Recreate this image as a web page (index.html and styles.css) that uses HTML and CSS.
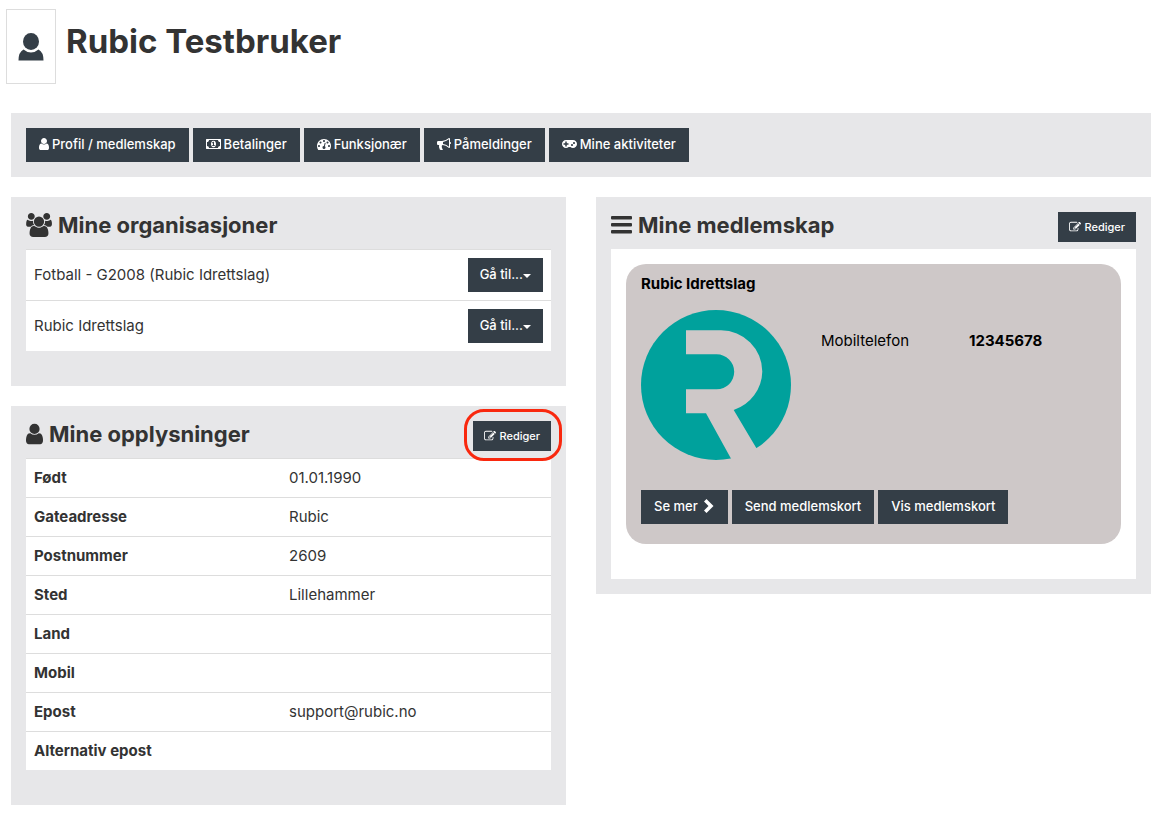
FILE: index.html
```html
<!DOCTYPE html>
<html lang="no">
<head>
    <meta charset="UTF-8">
    <meta name="viewport" content="width=device-width, initial-scale=1.0">
    <title>Rubic Testbruker</title>
    <link rel="stylesheet" href="styles.css">
</head>
<body>

    <!-- Icons used more than once -->
    <svg class="sprite" aria-hidden="true">
        <symbol id="icon-user" viewBox="256 0 1280 1792">
            <path d="M1536 1399q0 109-62.5 187t-150.5 78h-854q-88 0-150.5-78t-62.5-187q0-85 8.5-160.5t31.5-152 58.5-131 94-89 134.5-34.5q131 128 313 128t313-128q76 0 134.5 34.5t94 89 58.5 131 31.5 152 8.5 160.5zm-256-887q0 159-112.5 271.5t-271.5 112.5-271.5-112.5-112.5-271.5 112.5-271.5 271.5-112.5 271.5 112.5 112.5 271.5z"/>
        </symbol>
        <symbol id="icon-edit" viewBox="0 0 1792 1792">
            <path d="M888 1184l116-116-152-152-116 116v56h96v96h56zm440-720q-16-16-33 1l-350 350q-17 17-1 33t33-1l350-350q17-17 1-33zm80 594v190q0 119-84.5 203.5t-203.5 84.5h-832q-119 0-203.5-84.5t-84.5-203.5v-832q0-119 84.5-203.5t203.5-84.5h832q63 0 117 25 15 7 18 23 3 17-9 29l-49 49q-14 14-32 8-23-6-45-6h-832q-66 0-113 47t-47 113v832q0 66 47 113t113 47h832q66 0 113-47t47-113v-126q0-13 9-22l64-64q15-15 35-7t20 29zm-96-738l288 288-672 672h-288v-288zm444 132l-92 92-288-288 92-92q28-28 68-28t68 28l152 152q28 28 28 68t-28 68z"/>
        </symbol>
    </svg>

    <header class="page-header">
        <div class="avatar">
            <svg class="avatar-icon" viewBox="0 0 52 56" aria-hidden="true">
                <ellipse cx="26" cy="17" rx="16" ry="17"/>
                <path d="M11 33Q18 39 26 39T41 33Q51 38 51 55H1Q1 38 11 33z"/>
            </svg>
        </div>
        <h1>Rubic Testbruker</h1>
    </header>

    <nav class="toolbar">
        <a class="btn" href="#profil">
            <svg class="icon icon-narrow" aria-hidden="true"><use href="#icon-user"/></svg>
            Profil / medlemskap
        </a>
        <a class="btn" href="#betalinger">
            <svg class="icon icon-wide" viewBox="-64 0 1920 1792" aria-hidden="true">
                <path d="M704 1152h384v-96h-128v-448h-114l-148 137 77 80q42-37 55-57h2v288h-128v96zm512-256q0 70-21 142t-59.5 134-101.5 101-138 39-138-39-101.5-101-59.5-134-21-142 21-142 59.5-134 101.5-101 138-39 138 39 101.5 101 59.5 134 21 142zm512 256v-512q-106 0-181-75t-75-181h-1152q0 106-75 181t-181 75v512q106 0 181 75t75 181h1152q0-106 75-181t181-75zm128-832v1152q0 26-19 45t-45 19h-1792q-26 0-45-19t-19-45v-1152q0-26 19-45t45-19h1792q26 0 45 19t19 45z"/>
            </svg>
            Betalinger
        </a>
        <a class="btn" href="#funksjonaer">
            <svg class="icon" viewBox="0 0 1792 1792" aria-hidden="true">
                <path d="M384 1152q0-53-37.5-90.5t-90.5-37.5-90.5 37.5-37.5 90.5 37.5 90.5 90.5 37.5 90.5-37.5 37.5-90.5zm192-448q0-53-37.5-90.5t-90.5-37.5-90.5 37.5-37.5 90.5 37.5 90.5 90.5 37.5 90.5-37.5 37.5-90.5zm428 481l101-382q6-26-7.5-48.5t-38.5-29.5-48 6.5-30 39.5l-101 382q-60 5-107 43.5t-63 98.5q-20 77 20 146t117 89 146-20 89-117q16-60-6-117t-72-91zm660-33q0-53-37.5-90.5t-90.5-37.5-90.5 37.5-37.5 90.5 37.5 90.5 90.5 37.5 90.5-37.5 37.5-90.5zm-640-640q0-53-37.5-90.5t-90.5-37.5-90.5 37.5-37.5 90.5 37.5 90.5 90.5 37.5 90.5-37.5 37.5-90.5zm448 192q0-53-37.5-90.5t-90.5-37.5-90.5 37.5-37.5 90.5 37.5 90.5 90.5 37.5 90.5-37.5 37.5-90.5zm320 448q0 261-141 483-19 29-54 29h-1402q-35 0-54-29-141-221-141-483 0-182 71-348t191-286 286-191 348-71 348 71 286 191 191 286 71 348z"/>
            </svg>
            Funksjonær
        </a>
        <a class="btn" href="#pameldinger">
            <svg class="icon" viewBox="0 0 1792 1792" aria-hidden="true">
                <path d="M1664 640q53 0 90.5 37.5t37.5 90.5-37.5 90.5-90.5 37.5v384q0 52-38 90t-90 38q-417-347-812-380-58 19-91 66t-31 100.5 40 92.5q-20 33-23 65.5t6 58 33.5 55 48 50 61.5 50.5q-29 58-111.5 83t-168.5 11.5-132-55.5q-7-23-29.5-87.5t-32-94.5-23-89-15-101 3.5-98.5 22-110.5h-122q-66 0-113-47t-47-113v-192q0-66 47-113t113-47h480q435 0 896-384 52 0 90 38t38 90v384zm-128 604v-954q-394 302-768 343v270q377 42 768 341z"/>
            </svg>
            Påmeldinger
        </a>
        <a class="btn" href="#aktiviteter">
            <svg class="icon icon-wide" viewBox="0 128 1920 1792" aria-hidden="true">
                <path d="M832 1088v-128q0-14-9-23t-23-9h-192v-192q0-14-9-23t-23-9h-128q-14 0-23 9t-9 23v192h-192q-14 0-23 9t-9 23v128q0 14 9 23t23 9h192v192q0 14 9 23t23 9h128q14 0 23-9t9-23v-192h192q14 0 23-9t9-23zm576 64q0-53-37.5-90.5t-90.5-37.5-90.5 37.5-37.5 90.5 37.5 90.5 90.5 37.5 90.5-37.5 37.5-90.5zm256-256q0-53-37.5-90.5t-90.5-37.5-90.5 37.5-37.5 90.5 37.5 90.5 90.5 37.5 90.5-37.5 37.5-90.5zm256 128q0 212-150 362t-362 150q-192 0-338-128h-220q-146 128-338 128-212 0-362-150t-150-362 150-362 362-150h896q212 0 362 150t150 362z"/>
            </svg>
            Mine aktiviteter
        </a>
    </nav>

    <main class="columns">
        <div class="column">
            <section class="panel">
                <div class="panel-head">
                    <h2>
                        <svg class="head-icon head-icon-users" viewBox="-64 0 1920 1792" aria-hidden="true">
                            <path d="M529 896q-162 5-265 128h-134q-82 0-138-40.5t-56-118.5q0-353 124-353 6 0 43.5 21t97.5 42.5 119 21.5q67 0 133-23-5 37-5 66 0 159 90 256zm1071 637q0 120-73 189.5t-194 69.5h-874q-121 0-194-69.5t-73-189.5q0-53 3.5-103.5t14-109 26.5-108.5 43-97.5 62-81 85.5-53.5 111.5-20q10 0 43 21.5t73 48 107 48 135 21.5 135-21.5 107-48 73-48 43-21.5q61 0 111.5 20t85.5 53.5 62 81 43 97.5 26.5 108.5 14 109 3.5 103.5zm-1024-1277q0 106-75 181t-181 75-181-75-75-181 75-181 181-75 181 75 75 181zm704 384q0 159-112.5 271.5t-271.5 112.5-271.5-112.5-112.5-271.5 112.5-271.5 271.5-112.5 271.5 112.5 112.5 271.5zm576 225q0 78-56 118.5t-138 40.5h-134q-103-123-265-128 90-97 90-256 0-29-5-66 66 23 133 23 59 0 119-21.5t97.5-42.5 43.5-21q124 0 124 353zm-128-609q0 106-75 181t-181 75-181-75-75-181 75-181 181-75 181 75 75 181z"/>
                        </svg>
                        Mine organisasjoner
                    </h2>
                </div>
                <table class="table">
                    <tr>
                        <td>Fotball - G2008 (Rubic Idrettslag)</td>
                        <td class="actions"><button class="btn dropdown" type="button">Gå til...<span class="caret"></span></button></td>
                    </tr>
                    <tr>
                        <td>Rubic Idrettslag</td>
                        <td class="actions"><button class="btn dropdown" type="button">Gå til...<span class="caret"></span></button></td>
                    </tr>
                </table>
            </section>

            <section class="panel">
                <div class="panel-head">
                    <h2>
                        <svg class="head-icon head-icon-user" aria-hidden="true"><use href="#icon-user"/></svg>
                        Mine opplysninger
                    </h2>
                    <button class="btn btn-small highlighted" type="button">
                        <svg class="icon" aria-hidden="true"><use href="#icon-edit"/></svg>
                        Rediger
                    </button>
                </div>
                <table class="table info">
                    <tr><th scope="row">Født</th><td>01.01.1990</td></tr>
                    <tr><th scope="row">Gateadresse</th><td>Rubic</td></tr>
                    <tr><th scope="row">Postnummer</th><td>2609</td></tr>
                    <tr><th scope="row">Sted</th><td>Lillehammer</td></tr>
                    <tr><th scope="row">Land</th><td></td></tr>
                    <tr><th scope="row">Mobil</th><td></td></tr>
                    <tr><th scope="row">Epost</th><td>support@rubic.no</td></tr>
                    <tr><th scope="row">Alternativ epost</th><td></td></tr>
                </table>
            </section>
        </div>

        <div class="column">
            <section class="panel">
                <div class="panel-head">
                    <h2>
                        <svg class="head-icon head-icon-bars" viewBox="0 0 42 48" aria-hidden="true">
                            <rect y="6" width="42" height="7" rx="2"/>
                            <rect y="20" width="42" height="7" rx="2"/>
                            <rect y="34" width="42" height="7" rx="2"/>
                        </svg>
                        Mine medlemskap
                    </h2>
                    <button class="btn btn-small" type="button">
                        <svg class="icon" aria-hidden="true"><use href="#icon-edit"/></svg>
                        Rediger
                    </button>
                </div>
                <div class="memberships">
                    <article class="card">
                        <h3>Rubic Idrettslag</h3>
                        <div class="card-body">
                            <svg class="logo" viewBox="0 0 150 150" role="img" aria-label="Rubic">
                                <circle cx="75" cy="75" r="75" fill="#00a19c"/>
                                <path fill="#cec8c8" d="M45 20.3H80A41.3 41.3 0 0 1 121.3 61.6A41.3 41.3 0 0 1 92.7 100L124.5 153.5H92.7L65 103.3H45V79.3H75.7A17.5 17.5 0 0 0 75.7 44.3H45z"/>
                            </svg>
                            <dl class="details">
                                <dt>Mobiltelefon</dt>
                                <dd>12345678</dd>
                            </dl>
                        </div>
                        <div class="card-actions">
                            <button class="btn" type="button">
                                Se mer
                                <svg class="icon chevron" viewBox="0 0 24 28" aria-hidden="true">
                                    <path d="M2 5 7 0 21 14 7 28 2 23 11 14z"/>
                                </svg>
                            </button>
                            <button class="btn" type="button">Send medlemskort</button>
                            <button class="btn" type="button">Vis medlemskort</button>
                        </div>
                    </article>
                </div>
            </section>
        </div>
    </main>

</body>
</html>
```
FILE: styles.css
```css
* {
    box-sizing: border-box;
}

body {
    font-family: Inter, "Liberation Sans", sans-serif;
    font-size: 15px;
    line-height: 22px;
    color: #333;
    background-color: #fff;
    margin: 0;
    padding: 9px 11px 12px;
}

h1, h2, h3, dl, dd {
    margin: 0;
}

.sprite {
    display: none;
}

.page-header {
    display: flex;
    gap: 10px;
    margin: 0 0 29px -5px;
}

.page-header h1 {
    font-size: 33px;
    line-height: 64px;
    font-weight: 700;
}

.avatar {
    display: flex;
    align-items: center;
    justify-content: center;
    width: 50px;
    height: 75px;
    border: 1px solid #ddd;
}

.avatar-icon {
    width: 26px;
    height: 28px;
    fill: #343e47;
}

.toolbar {
    display: flex;
    flex-wrap: wrap;
    gap: 4px;
    padding: 15px;
    margin-bottom: 20px;
    background-color: #e7e7e9;
}

.btn {
    display: inline-flex;
    align-items: center;
    gap: 3px;
    padding: 6px 13px 8px;
    border: none;
    font-family: inherit;
    font-size: 13px;
    line-height: 20px;
    font-weight: 500;
    color: #fff;
    background-color: #343e47;
    text-decoration: none;
    white-space: nowrap;
    cursor: pointer;
}

.btn:hover {
    background-color: #232b32;
}

.btn-small {
    padding: 6px 11px;
    font-size: 11px;
    line-height: 18px;
}

.icon {
    width: 14px;
    height: 14px;
    fill: currentColor;
}

.icon-narrow {
    width: 10px;
}

.icon-wide {
    width: 15px;
}

.btn-small .icon {
    width: 12px;
    height: 12px;
}

.chevron {
    width: 12px;
    margin-left: 2px;
}

.columns {
    display: grid;
    grid-template-columns: 1fr 1fr;
    gap: 30px;
    align-items: start;
}

.column {
    display: grid;
    gap: 20px;
}

.panel {
    padding: 15px;
    background-color: #e7e7e9;
}

.panel-head {
    display: flex;
    justify-content: space-between;
    align-items: flex-start;
    height: 37px;
}

.panel-head h2 {
    display: flex;
    align-items: center;
    gap: 6px;
    font-size: 22px;
    line-height: 26px;
    font-weight: 700;
}

.head-icon {
    height: 24px;
    fill: currentColor;
}

.head-icon-users {
    width: 26px;
}

.head-icon-user {
    width: 17px;
}

.head-icon-bars {
    width: 21px;
}

/* Red ring around the edit button */
.highlighted {
    position: relative;
}

.highlighted::after {
    content: "";
    position: absolute;
    inset: -12px -11px -10px -9px;
    border: 3px solid #f9280e;
    border-radius: 20px;
    pointer-events: none;
}

.table {
    width: 100%;
    margin-bottom: 20px;
    border-collapse: separate;
    border-spacing: 0;
    background-color: #fff;
}

.table th,
.table td {
    padding: 8px;
    border-top: 1px solid #ddd;
    text-align: left;
}

.table .actions {
    text-align: right;
    line-height: 0;
}

.dropdown {
    gap: 0;
    padding-left: 12px;
    padding-right: 12px;
}

.caret {
    border-top: 4px solid;
    border-left: 4px solid transparent;
    border-right: 4px solid transparent;
    margin-top: 4px;
}

.info {
    table-layout: fixed;
}

.info th {
    width: 255px;
    font-weight: 700;
}

.info td {
    height: 39px;
}

.memberships {
    padding: 15px 15px 35px;
    background-color: #fff;
}

.card {
    padding: 10px 15px 20px;
    border-radius: 20px;
    color: #000;
    background-color: #cec8c8;
}

.card h3 {
    margin-bottom: 16px;
    font-size: 15px;
    line-height: 20px;
}

.card-body {
    display: flex;
    gap: 30px;
    margin-bottom: 30px;
}

.logo {
    width: 150px;
    height: 150px;
}

.details {
    display: grid;
    grid-template-columns: 148px auto;
    align-content: start;
    padding-top: 20px;
}

.details dd {
    font-weight: 700;
}

.card-actions {
    display: flex;
    flex-wrap: wrap;
    gap: 4px;
}
```
